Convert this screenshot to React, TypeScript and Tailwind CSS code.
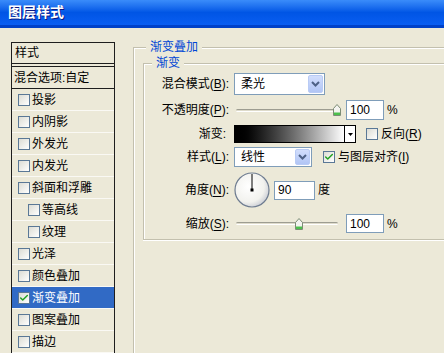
import { Check } from 'lucide-react';

const font = { fontFamily: '"Liberation Sans", "Noto Sans CJK SC", sans-serif' };

function Box({ checked = false }: { checked?: boolean }) {
  return (
    <span className="w-[12px] h-[12px] shrink-0 border border-[#5A7896] bg-gradient-to-br from-[#DCDCD4] to-white flex items-center justify-center">
      {checked && <Check size={10} strokeWidth={3.5} className="text-[#21A121]" />}
    </span>
  );
}

function U({ c }: { c: string }) {
  return <span className="underline underline-offset-2">{c}</span>;
}

function DropBtn() {
  return (
    <span className="w-[15px] h-full rounded-[2px] border border-[#B9CBF5] bg-gradient-to-b from-[#D2DEFC] to-[#B1C5F5] flex items-center justify-center">
      <svg width="9" height="6" viewBox="0 0 9 6">
        <polyline points="1,1 4.5,4.5 8,1" fill="none" stroke="#4D6185" strokeWidth="2" />
      </svg>
    </span>
  );
}

function Select({ value, width }: { value: string; width: string }) {
  return (
    <div className={`${width} h-full border border-[#7F9DB9] bg-white flex items-center pl-[6px] pr-[1px] py-[1px]`}>
      <span className="flex-1 text-[12px]">{value}</span>
      <DropBtn />
    </div>
  );
}

function Slider({ pos }: { pos: number }) {
  return (
    <div className="w-[112px] h-full relative flex items-center pl-[2px] pr-[8px]">
      <div className="w-full h-[3px] border-t border-[#9D9D91] border-b border-b-white bg-[#DEDBCB] rounded-full" />
      <svg width="8" height="12" viewBox="0 0 8 12" className="absolute top-1/2 -translate-y-1/2" style={{ left: pos }}>
        <path d="M0.5 11.5 V4.5 L4 0.5 L7.5 4.5 V11.5 Z" fill="#F4F4F0" stroke="#7C8C76" />
        <path d="M1 8.5 H7 V11 H1 Z" fill="#4CC04C" />
      </svg>
    </div>
  );
}

function NumInput({ value, width }: { value: string; width: string }) {
  return (
    <div className={`${width} h-full border border-[#7F9DB9] bg-white flex items-center pl-[3px] text-[12px]`}>{value}</div>
  );
}

const items: { name: string; indent?: boolean; checked?: boolean; active?: boolean }[] = [
  { name: '投影' },
  { name: '内阴影' },
  { name: '外发光' },
  { name: '内发光' },
  { name: '斜面和浮雕' },
  { name: '等高线', indent: true },
  { name: '纹理', indent: true },
  { name: '光泽' },
  { name: '颜色叠加' },
  { name: '渐变叠加', checked: true, active: true },
  { name: '图案叠加' },
  { name: '描边' },
];

export default function App() {
  return (
    <div className="w-[444px] h-[353px] overflow-hidden bg-[#ECE9D8] flex flex-col text-black" style={font}>
      <div className="h-[28px] shrink-0 bg-gradient-to-b from-[#3A8CFA] via-[#0055E5] to-[#0A5EF2] border-b-[3px] border-[#0041C8] flex items-center pl-[8px]">
        <span className="text-white font-bold text-[14px] [text-shadow:1px_1px_0_#0A1883]">图层样式</span>
      </div>
      <div className="flex flex-1">
        <div className="w-[3px] bg-gradient-to-r from-[#0841D0] via-[#166AEE] to-[#0055E5]" />
        <div className="flex flex-1 pl-[11px] pt-[14px]">
          <div className="w-[104px] border border-b-0 border-[#1E1E1E] flex flex-col text-[12px]">
            <div className="h-[21px] flex items-center pl-[3px] border-b border-[#1E1E1E]">样式</div>
            <div className="h-[3px] border-b border-[#1E1E1E]" />
            <div className="h-[22px] flex items-center pl-[2px] border-b border-[#1E1E1E]">混合选项:自定</div>
            {items.map((it) => (
              <div
                key={it.name}
                className={`h-[22px] shrink-0 flex items-center gap-[2px] border-b border-[#FAF9F4] ${
                  it.indent ? 'pl-[16px]' : 'pl-[6px]'
                } ${it.active ? 'bg-[#316AC5] text-white' : ''}`}
              >
                <Box checked={it.checked} />
                <span>{it.name}</span>
              </div>
            ))}
          </div>

          <div className="flex-1 ml-[18px] mt-[5px] border-l border-t border-[#C3C0AE] shadow-[inset_1px_1px_0_#FFFFFF] relative pl-[9px] pt-[15px]">
            <span className="absolute left-[12px] -top-[9px] px-[4px] bg-[#ECE9D8] text-[#0046D5] text-[12px] leading-[16px]">渐变叠加</span>
            <div className="w-[320px] h-[177px] border-l border-t border-b border-[#C3C0AE] shadow-[inset_1px_1px_0_#FFFFFF,0_1px_0_#FFFFFF] relative pt-[9px] text-[12px]">
              <span className="absolute left-[8px] -top-[9px] px-[4px] bg-[#ECE9D8] text-[#0046D5] leading-[16px]">渐变</span>

              <div className="h-[22px] flex items-center">
                <span className="w-[86px] text-right pr-[1px]">混合模式(<U c="B" />):</span>
                <div className="ml-[4px] h-full"><Select value="柔光" width="w-[91px]" /></div>
              </div>

              <div className="h-[20px] mt-[5px] flex items-center">
                <span className="w-[86px] text-right pr-[1px]">不透明度(<U c="P" />):</span>
                <div className="ml-[4px] h-full flex items-center">
                  <Slider pos={99} />
                  <NumInput value="100" width="w-[38px]" />
                  <span className="ml-[3px]">%</span>
                </div>
              </div>

              <div className="h-[18px] mt-[5px] flex items-center">
                <span className="w-[86px] text-right pr-[4px]">渐变:</span>
                <div className="ml-[4px] h-full flex items-center">
                  <div className="w-[111px] h-full border border-black bg-gradient-to-r from-black to-white" />
                  <div className="w-[11px] h-full border border-l-0 border-black bg-white flex items-center justify-center">
                    <svg width="5" height="3" viewBox="0 0 5 3"><path d="M0 0 H5 L2.5 3 Z" fill="#000" /></svg>
                  </div>
                  <span className="ml-[10px]"><Box /></span>
                  <span className="ml-[3px]">反向(<U c="R" />)</span>
                </div>
              </div>

              <div className="h-[20px] mt-[4px] flex items-center">
                <span className="w-[86px] text-right pr-[1px]">样式(<U c="L" />):</span>
                <div className="ml-[4px] h-full flex items-center">
                  <div className="h-full"><Select value="线性" width="w-[78px]" /></div>
                  <span className="ml-[11px]"><Box checked /></span>
                  <span className="ml-[3px]">与图层对齐(<U c="I" />)</span>
                </div>
              </div>

              <div className="h-[36px] mt-[5px] flex items-center">
                <span className="w-[86px] text-right pr-[1px]">角度(<U c="N" />):</span>
                <div className="ml-[4px] h-full flex items-center">
                  <svg width="36" height="36" viewBox="0 0 36 36">
                    <defs>
                      <radialGradient id="dial" cx="0.4" cy="0.4" r="0.65">
                        <stop offset="0" stopColor="#FFFFFF" />
                        <stop offset="0.7" stopColor="#F2F2EE" />
                        <stop offset="1" stopColor="#C9CCD4" />
                      </radialGradient>
                    </defs>
                    <circle cx="18" cy="18" r="17" fill="url(#dial)" stroke="#6E7C90" strokeWidth="1.2" />
                    <line x1="18" y1="18" x2="18" y2="2" stroke="#000" strokeWidth="1" />
                    <rect x="16.5" y="16.5" width="3" height="3" fill="#000" />
                  </svg>
                  <div className="h-[19px] ml-[4px]"><NumInput value="90" width="w-[41px]" /></div>
                  <span className="ml-[3px]">度</span>
                </div>
              </div>

              <div className="h-[19px] mt-[6px] flex items-center">
                <span className="w-[86px] text-right pr-[1px]">缩放(<U c="S" />):</span>
                <div className="ml-[4px] h-full flex items-center">
                  <Slider pos={61} />
                  <NumInput value="100" width="w-[38px]" />
                  <span className="ml-[3px]">%</span>
                </div>
              </div>
            </div>
          </div>
        </div>
      </div>
    </div>
  );
}
